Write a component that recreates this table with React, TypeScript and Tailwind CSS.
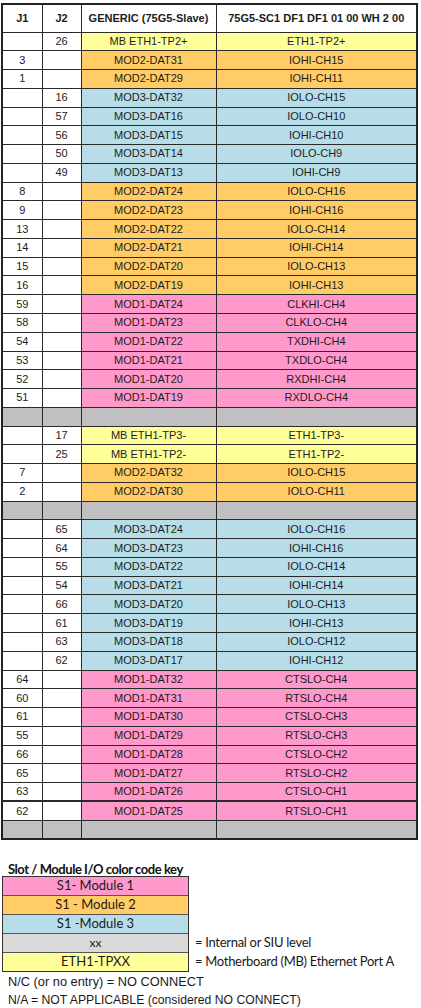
const Y = "bg-[#ffff99]";
const O = "bg-[#ffcc66]";
const B = "bg-[#b7dee8]";
const P = "bg-[#ff99cc]";
const G = "gray";

type Row = [string, string, string, string, string, boolean?];

const rows: Row[] = [
  ["", "26", "MB ETH1-TP2+", "ETH1-TP2+", Y],
  ["3", "", "MOD2-DAT31", "IOHI-CH15", O],
  ["1", "", "MOD2-DAT29", "IOHI-CH11", O],
  ["", "16", "MOD3-DAT32", "IOLO-CH15", B],
  ["", "57", "MOD3-DAT16", "IOLO-CH10", B],
  ["", "56", "MOD3-DAT15", "IOHI-CH10", B],
  ["", "50", "MOD3-DAT14", "IOLO-CH9", B],
  ["", "49", "MOD3-DAT13", "IOHI-CH9", B],
  ["8", "", "MOD2-DAT24", "IOLO-CH16", O],
  ["9", "", "MOD2-DAT23", "IOHI-CH16", O],
  ["13", "", "MOD2-DAT22", "IOLO-CH14", O],
  ["14", "", "MOD2-DAT21", "IOHI-CH14", O],
  ["15", "", "MOD2-DAT20", "IOLO-CH13", O],
  ["16", "", "MOD2-DAT19", "IOHI-CH13", O],
  ["59", "", "MOD1-DAT24", "CLKHI-CH4", P],
  ["58", "", "MOD1-DAT23", "CLKLO-CH4", P],
  ["54", "", "MOD1-DAT22", "TXDHI-CH4", P],
  ["53", "", "MOD1-DAT21", "TXDLO-CH4", P],
  ["52", "", "MOD1-DAT20", "RXDHI-CH4", P],
  ["51", "", "MOD1-DAT19", "RXDLO-CH4", P],
  ["", "", "", "", G],
  ["", "17", "MB ETH1-TP3-", "ETH1-TP3-", Y],
  ["", "25", "MB ETH1-TP2-", "ETH1-TP2-", Y],
  ["7", "", "MOD2-DAT32", "IOLO-CH15", O],
  ["2", "", "MOD2-DAT30", "IOLO-CH11", O],
  ["", "", "", "", G],
  ["", "65", "MOD3-DAT24", "IOLO-CH16", B],
  ["", "64", "MOD3-DAT23", "IOHI-CH16", B],
  ["", "55", "MOD3-DAT22", "IOLO-CH14", B],
  ["", "54", "MOD3-DAT21", "IOHI-CH14", B],
  ["", "66", "MOD3-DAT20", "IOLO-CH13", B],
  ["", "61", "MOD3-DAT19", "IOHI-CH13", B],
  ["", "63", "MOD3-DAT18", "IOLO-CH12", B],
  ["", "62", "MOD3-DAT17", "IOHI-CH12", B],
  ["64", "", "MOD1-DAT32", "CTSLO-CH4", P],
  ["60", "", "MOD1-DAT31", "RTSLO-CH4", P],
  ["61", "", "MOD1-DAT30", "CTSLO-CH3", P],
  ["55", "", "MOD1-DAT29", "RTSLO-CH3", P],
  ["66", "", "MOD1-DAT28", "CTSLO-CH2", P],
  ["65", "", "MOD1-DAT27", "RTSLO-CH2", P],
  ["63", "", "MOD1-DAT26", "CTSLO-CH1", P],
  ["62", "", "MOD1-DAT25", "RTSLO-CH1", P, true],
  ["", "", "", "", G],
];

const cell = "border border-[#2a2a2a] p-0 text-center align-middle";

export default function App() {
  return (
    <div className="w-[421px] h-[1008px] bg-white text-[#1c1c1c] font-['Liberation_Sans',Arial,sans-serif]">
      <div className="pt-[3px] pl-[1px]">
        <table className="border-collapse border-2 border-[#222] table-fixed w-[415px] text-[11px] leading-none font-['Liberation_Sans',Arial,sans-serif]">
          <colgroup>
            <col className="w-[40px]" />
            <col className="w-[39px]" />
            <col className="w-[135px]" />
            <col className="w-[201px]" />
          </colgroup>
          <thead>
            <tr className="h-[28px] font-bold">
              <th className={cell}>J1</th>
              <th className={cell}>J2</th>
              <th className={cell}>GENERIC (75G5-Slave)</th>
              <th className={cell}>75G5-SC1 DF1 DF1 01 00 WH 2 00</th>
            </tr>
          </thead>
          <tbody>
            {rows.map((r, i) => {
              const gray = r[4] === G;
              const side = gray ? "bg-[#c0c0c0]" : "bg-white";
              const main = gray ? "bg-[#c0c0c0]" : r[4];
              const dbl = r[5] ? "border-t-[2px] border-t-[#2a2a2a]" : "";
              return (
                <tr key={i} className="h-[18.77px]">
                  <td className={`${cell} ${side} ${dbl}`}>{r[0]}</td>
                  <td className={`${cell} ${side} ${dbl}`}>{r[1]}</td>
                  <td className={`${cell} ${main} ${dbl}`}>{r[2]}</td>
                  <td className={`${cell} ${main} ${dbl}`}>{r[3]}</td>
                </tr>
              );
            })}
          </tbody>
        </table>
      </div>

      {/* color key */}
      <div className="mt-[23px] pl-[2px] font-['Lato','Liberation_Sans',sans-serif] text-[13px] text-[#1a1a1a]">
        <div className="pl-[6px] font-bold text-[13px] tracking-[-0.45px] leading-[13px] text-[#111]">
          Slot / Module I/O color code key
        </div>
        <div className="flex">
          <div className="w-[187px] border border-[#333] leading-none">
            <div className="h-[19px] flex items-center justify-center bg-[#ff99cc] border-b border-[#555]">S1- Module 1</div>
            <div className="h-[19px] flex items-center justify-center bg-[#ffcc66] border-b border-[#555]">S1 - Module 2</div>
            <div className="h-[19px] flex items-center justify-center bg-[#b7dee8] border-b border-[#555]">S1 -Module 3</div>
            <div className="h-[19px] flex items-center justify-center bg-[#d9d9d9] border-b border-[#555] text-[12px]">xx</div>
            <div className="h-[18px] flex items-center justify-center bg-[#ffff99]">ETH1-TPXX</div>
          </div>
          <div className="pl-[6px] flex flex-col pt-[57px] leading-none tracking-[-0.3px]">
            <div className="h-[19px] flex items-center">= Internal or SIU level</div>
            <div className="h-[19px] flex items-center">= Motherboard (MB) Ethernet Port A</div>
          </div>
        </div>
        <div className="pl-[6px] font-['Liberation_Sans',Arial,sans-serif] leading-[18px] mt-[1px]">
          <div className="text-[12.8px]">N/C (or no entry) = NO CONNECT</div>
          <div className="text-[12.2px]">N/A = NOT APPLICABLE (considered NO CONNECT)</div>
        </div>
      </div>
    </div>
  );
}
